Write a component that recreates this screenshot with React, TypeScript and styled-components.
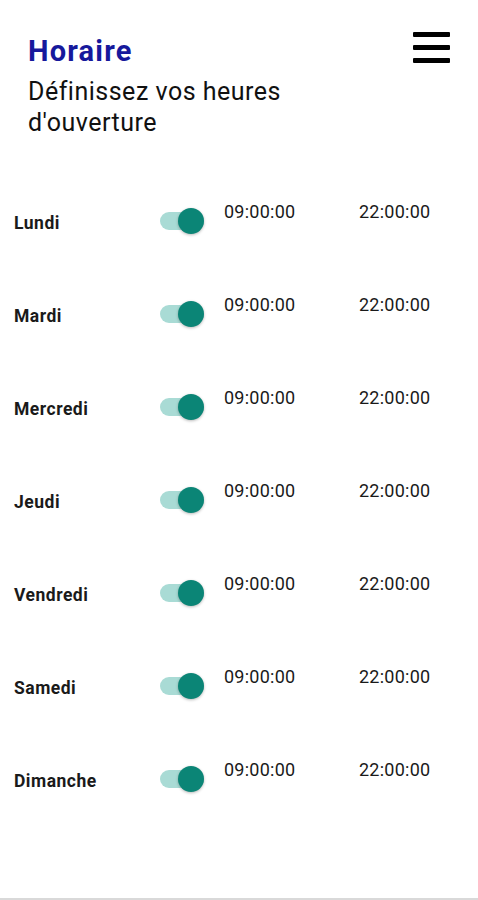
import React from "react";
import styled, { createGlobalStyle } from "styled-components";

const Global = createGlobalStyle`
  html, body { margin: 0; padding: 0; background: #ffffff; }
  body { font-family: Roboto, "Noto Sans", Arial, sans-serif; color: #111; }
  * { box-sizing: border-box; }
`;

const Page = styled.div`
  height: 900px;
  display: flex;
  flex-direction: column;
  background: #fff;
`;

const Header = styled.header`
  display: flex;
  justify-content: space-between;
  align-items: flex-start;
  padding: 35px 28px 0 28px;
`;

const TitleBlock = styled.div`
  display: flex;
  flex-direction: column;
`;

const Title = styled.h1`
  margin: 0;
  font-family: Roboto, sans-serif;
  font-weight: 700;
  font-size: 29px;
  letter-spacing: 1.2px;
  line-height: 33px;
  color: #16199c;
`;

const Subtitle = styled.p`
  margin: 8px 0 0 0;
  font-family: Roboto, sans-serif;
  font-weight: 400;
  font-size: 25px;
  letter-spacing: 0.5px;
  line-height: 31px;
  color: #111;
  width: 290px;
`;

const MenuButton = styled.button`
  border: none;
  background: transparent;
  padding: 0;
  margin: -3px 0 0 0;
  width: 37px;
  display: flex;
  flex-direction: column;
  gap: 8px;
  cursor: pointer;
`;

const MenuBar = styled.span`
  display: block;
  width: 37px;
  height: 5px;
  background: #000;
  border-radius: 1px;
`;

const List = styled.div`
  display: flex;
  flex-direction: column;
  gap: 53px;
  padding: 0 0 0 14px;
  margin-top: 63px;
`;

const Row = styled.div`
  display: flex;
  align-items: center;
  height: 40px;
`;

const DayLabel = styled.span`
  width: 146px;
  font-family: Roboto, sans-serif;
  font-weight: 700;
  font-size: 17.5px;
  letter-spacing: 0.5px;
  color: #1a1a1a;
  padding-top: 3px;
`;

const SwitchTrack = styled.span<{ $on: boolean }>`
  position: relative;
  display: inline-block;
  width: 44px;
  height: 18px;
  border-radius: 9px;
  background: ${(p) => (p.$on ? "#a9dbd5" : "#c8c8c8")};
  margin-right: 20px;
`;

const SwitchThumb = styled.span<{ $on: boolean }>`
  position: absolute;
  top: 50%;
  left: ${(p) => (p.$on ? "18px" : "-2px")};
  width: 26px;
  height: 26px;
  margin-top: -13px;
  border-radius: 50%;
  background: ${(p) => (p.$on ? "#0b8576" : "#f4f4f4")};
  box-shadow: 0 1px 3px rgba(0, 0, 0, 0.28);
`;

const Time = styled.span<{ $w?: number }>`
  align-self: flex-start;
  width: ${(p) => (p.$w ? `${p.$w}px` : "auto")};
  font-family: Roboto, sans-serif;
  font-size: 18px;
  letter-spacing: 0.25px;
  line-height: 21px;
  color: #1a1a1a;
`;

const Spacer = styled.div`
  flex: 1;
`;

const BottomLine = styled.div`
  height: 2px;
  background: #d9d9d9;
`;

const days = [
  "Lundi",
  "Mardi",
  "Mercredi",
  "Jeudi",
  "Vendredi",
  "Samedi",
  "Dimanche",
];

export default function App() {
  return (
    <Page>
      <Global />
      <Header>
        <TitleBlock>
          <Title>Horaire</Title>
          <Subtitle>Définissez vos heures d'ouverture</Subtitle>
        </TitleBlock>
        <MenuButton aria-label="menu">
          <MenuBar />
          <MenuBar />
          <MenuBar />
        </MenuButton>
      </Header>
      <List>
        {days.map((d) => (
          <Row key={d}>
            <DayLabel>{d}</DayLabel>
            <SwitchTrack $on>
              <SwitchThumb $on />
            </SwitchTrack>
            <Time $w={135}>09:00:00</Time>
            <Time>22:00:00</Time>
          </Row>
        ))}
      </List>
      <Spacer />
      <BottomLine />
    </Page>
  );
}
